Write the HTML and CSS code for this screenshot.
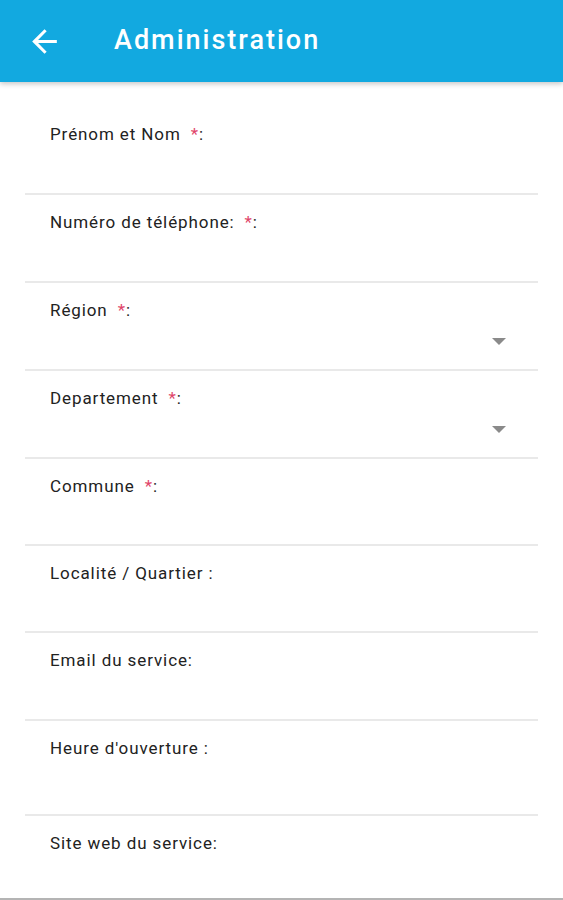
FILE: index.html
```html
<!DOCTYPE html>
<html lang="fr">
<head>
<meta charset="utf-8">
<title>Administration</title>
<link rel="stylesheet" href="styles.css">
</head>
<body>
<div class="screen">
  <header class="appbar">
    <svg class="back" viewBox="0 0 24 24" aria-hidden="true"><path d="M20 11H7.83l5.59-5.59L12 4l-8 8 8 8 1.41-1.41L7.83 13H20v-2z"/></svg>
    <h1 class="title">Administration</h1>
  </header>
  <main class="form">
    <div class="row first"><div class="label">Prénom et Nom<span class="req">*</span>:</div><div class="field"></div></div>
    <div class="row"><div class="label">Numéro de téléphone:<span class="req">*</span>:</div><div class="field"></div></div>
    <div class="row"><div class="label">Région<span class="req">*</span>:</div><div class="field select"><span class="caret"></span></div></div>
    <div class="row"><div class="label">Departement<span class="req">*</span>:</div><div class="field select"><span class="caret"></span></div></div>
    <div class="row short"><div class="label">Commune<span class="req">*</span>:</div><div class="field"></div></div>
    <div class="row short"><div class="label">Localité / Quartier :</div><div class="field"></div></div>
    <div class="row"><div class="label">Email du service:</div><div class="field"></div></div>
    <div class="row tall"><div class="label">Heure d'ouverture :</div><div class="field"></div></div>
    <div class="row last"><div class="label">Site web du service:</div><div class="field"></div></div>
  </main>
</div>
</body>
</html>
```
FILE: styles.css
```css
* { box-sizing: border-box; }
html, body { margin: 0; padding: 0; background: #fff; }
body { font-family: Roboto, "Noto Sans", sans-serif; }
.screen {
  width: 563px;
  height: 900px;
  display: flex;
  flex-direction: column;
  overflow: hidden;
  border-bottom: 2px solid #b4b4b4;
}
.appbar {
  height: 82px;
  flex: none;
  background: #12a9e0;
  display: flex;
  align-items: center;
  padding-left: 26px;
  box-shadow: 0 2px 5px rgba(0,0,0,0.22);
  position: relative;
  z-index: 1;
}
.back { width: 37px; height: 37px; fill: #fff; display: block; }
.title {
  margin: 0 0 0 51px;
  color: #fff;
  font-size: 27px;
  font-weight: 500;
  letter-spacing: 2px;
  line-height: 1;
  position: relative;
  top: -1px;
}
.form {
  padding: 0 25px;
  flex: 1;
}
.row {
  border-bottom: 2px solid #e9e9e9;
  padding-top: 17px;
}
.row.first { padding-top: 42px; }
.row.last { border-bottom: none; }
.label {
  padding-left: 25px;
  font-size: 17px;
  letter-spacing: 0.9px;
  line-height: 20px;
  color: #222;
}
.req { color: #e0466a; margin-left: 10px; }
.field { height: 49px; display: flex; justify-content: flex-end; padding-top: 18px; padding-right: 32px; }
.row.short .field { height: 48px; }
.row.tall .field { height: 56px; }
.row.last .field { height: 40px; }
.caret {
  width: 0; height: 0;
  border-left: 7px solid transparent;
  border-right: 7px solid transparent;
  border-top: 7px solid #8a8a8a;
}
```
